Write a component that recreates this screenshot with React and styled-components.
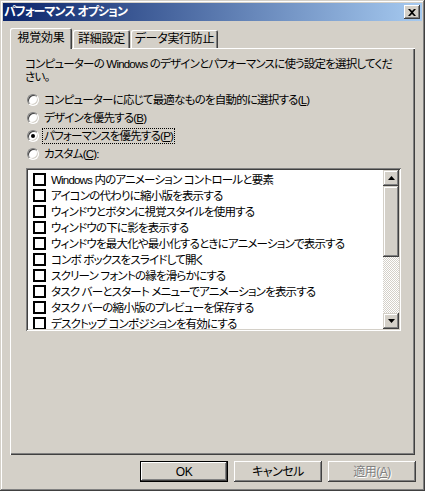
import React from "react";
import styled, { createGlobalStyle } from "styled-components";

const GlobalStyle = createGlobalStyle`
  html, body {
    margin: 0;
    padding: 0;
    background: #d4d0c8;
  }
`;

const raised = `
  box-shadow: inset -1px -1px #404040, inset 1px 1px #ffffff,
    inset -2px -2px #808080, inset 2px 2px #d4d0c8;
`;

// narrow Japanese text, close to the old bitmap UI font
const tight = `
  font-size: 11.5px;
  letter-spacing: -0.8px;
`;

const Window = styled.div`
  width: 425px;
  height: 491px;
  box-sizing: border-box;
  padding: 3px;
  background: #d4d0c8;
  box-shadow: inset -1px -1px #404040, inset 1px 1px #d4d0c8,
    inset -2px -2px #808080, inset 2px 2px #ffffff;
  display: flex;
  flex-direction: column;
  font-family: "Liberation Sans", "Noto Sans CJK JP", sans-serif;
  font-size: 12px;
  font-feature-settings: "palt";
  color: #000;
`;

const TitleBar = styled.div`
  height: 18px;
  flex: none;
  display: flex;
  align-items: center;
  justify-content: space-between;
  padding: 0 2px 0 1px;
  background: linear-gradient(to right, #0a246a, #a6caf0);
`;

const TitleText = styled.div`
  color: #fff;
  font-weight: bold;
  font-size: 12px;
  line-height: 18px;
  letter-spacing: -0.9px;
`;

const CloseButton = styled.div`
  width: 16px;
  height: 14px;
  background: #d4d0c8;
  ${raised}
  display: flex;
  align-items: center;
  justify-content: center;
`;

const Body = styled.div`
  flex: 1;
  display: flex;
  flex-direction: column;
  padding: 7px 7px 6px 7px;
  min-height: 0;
`;

const TabRow = styled.div`
  height: 20px;
  flex: none;
  display: flex;
  align-items: flex-end;
  position: relative;
  z-index: 1;
`;

const Tab = styled.div`
  box-sizing: border-box;
  width: ${(p) => p.$w}px;
  height: ${(p) => (p.$active ? 21 : 18)}px;
  margin-bottom: ${(p) => (p.$active ? -1 : 0)}px;
  margin-right: ${(p) => (p.$gap ? 1 : 0)}px;
  padding-bottom: ${(p) => (p.$active ? 2 : 0)}px;
  border-radius: 2px 2px 0 0;
  background: #d4d0c8;
  box-shadow: inset 1px 1px #ffffff, inset -1px 0 #404040, inset -2px 0 #808080;
  display: flex;
  align-items: center;
  justify-content: center;
  line-height: 14px;
  letter-spacing: -0.3px;
  white-space: nowrap;
`;

const Panel = styled.div`
  flex: 1;
  box-sizing: border-box;
  padding: 10px 15px 0 16px;
  box-shadow: inset 1px 1px #ffffff, inset -1px -1px #404040, inset -2px -2px #808080;
  display: flex;
  flex-direction: column;
`;

const Intro = styled.div`
  ${tight}
  line-height: 13px;
  margin-left: -1px;
  margin-bottom: 7px;
  white-space: nowrap;
`;

const RadioRow = styled.div`
  height: 18px;
  display: flex;
  align-items: center;
  gap: 4px;
  padding-left: 1px;
`;

const RadioDot = styled.span`
  position: relative;
  box-sizing: border-box;
  width: 12px;
  height: 12px;
  flex: none;
  border-radius: 50%;
  background: #fff;
  border: 1px solid;
  border-color: #808080 #ffffff #ffffff #808080;
  box-shadow: inset 1px 1px #404040, inset -1px -1px #d4d0c8;

  &::after {
    content: "";
    display: ${(p) => (p.$checked ? "block" : "none")};
    position: absolute;
    left: 3px;
    top: 3px;
    width: 4px;
    height: 4px;
    border-radius: 50%;
    background: #000;
  }
`;

const RadioLabel = styled.span`
  ${tight}
  line-height: 14px;
  padding: 0 1px;
  outline: ${(p) => (p.$focus ? "1px dotted #000" : "none")};
  white-space: nowrap;
`;

const ListBox = styled.div`
  margin-top: 5px;
  height: 163px;
  box-sizing: border-box;
  padding: 2px;
  margin-right: -1px;
  background: #fff;
  box-shadow: inset 1px 1px #808080, inset -1px -1px #ffffff,
    inset 2px 2px #404040, inset -2px -2px #d4d0c8;
  display: flex;
`;

const Items = styled.div`
  flex: 1;
  overflow: hidden;
  padding-top: 1px;
`;

const Item = styled.div`
  ${tight}
  height: 16px;
  display: flex;
  align-items: center;
  gap: 5px;
  padding-left: 5px;
  white-space: nowrap;
`;

const Check = styled.span`
  width: 13px;
  height: 13px;
  box-sizing: border-box;
  border: 2px solid #000;
  background: #fff;
  flex: none;
`;

const ScrollBar = styled.div`
  width: 16px;
  flex: none;
  display: flex;
  flex-direction: column;
`;

const ScrollButton = styled.div`
  height: 16px;
  flex: none;
  background: #d4d0c8;
  box-shadow: inset -1px -1px #404040, inset 1px 1px #d4d0c8,
    inset -2px -2px #808080, inset 2px 2px #ffffff;
  display: flex;
  align-items: center;
  justify-content: center;
`;

const Thumb = styled(ScrollButton)`
  height: 71px;
`;

const Track = styled.div`
  flex: 1;
  background-color: #d4d0c8;
  background-image: conic-gradient(#ffffff 25%, #d4d0c8 0 50%, #ffffff 0 75%, #d4d0c8 0);
  background-size: 2px 2px;
`;

const ButtonRow = styled.div`
  flex: none;
  display: flex;
  justify-content: flex-end;
  gap: 6px;
  margin-top: 6px;
  margin-right: -1px;
`;

const Button = styled.div`
  width: 88px;
  height: 21px;
  box-sizing: border-box;
  background: #d4d0c8;
  display: flex;
  align-items: center;
  justify-content: center;
  line-height: 14px;
  letter-spacing: -0.5px;
  color: ${(p) => (p.$disabled ? "#808080" : "#000")};
  text-shadow: ${(p) => (p.$disabled ? "1px 1px #ffffff" : "none")};
  ${(p) =>
    p.$default
      ? `box-shadow: inset 0 0 0 1px #000, inset -2px -2px #404040, inset 2px 2px #ffffff, inset -3px -3px #808080;`
      : `box-shadow: inset -1px -1px #404040, inset 1px 1px #ffffff, inset -2px -2px #808080, inset 2px 2px #d4d0c8;`}
`;

const Arrow = ({ down }) => (
  <svg width="7" height="4" viewBox="0 0 7 4">
    <path d={down ? "M0 0H7L3.5 4Z" : "M0 4H7L3.5 0Z"} fill="#000" />
  </svg>
);

const CloseIcon = () => (
  <svg width="8" height="7" viewBox="0 0 8 7">
    <path d="M0 0h2l2 2 2-2h2L5 3.5 8 7H6L4 5 2 7H0l3-3.5Z" fill="#000" />
  </svg>
);

const radios = [
  { label: "コンピューターに応じて最適なものを自動的に選択する", key: "L" },
  { label: "デザインを優先する", key: "B" },
  { label: "パフォーマンスを優先する", key: "P", checked: true },
  { label: "カスタム", key: "C", colon: true },
];

const effects = [
  "Windows 内のアニメーション コントロールと要素",
  "アイコンの代わりに縮小版を表示する",
  "ウィンドウとボタンに視覚スタイルを使用する",
  "ウィンドウの下に影を表示する",
  "ウィンドウを最大化や最小化するときにアニメーションで表示する",
  "コンボ ボックスをスライドして開く",
  "スクリーン フォントの縁を滑らかにする",
  "タスク バーとスタート メニューでアニメーションを表示する",
  "タスク バーの縮小版のプレビューを保存する",
  "デスクトップ コンポジションを有効にする",
];

const App = () => {
  return (
    <>
      <GlobalStyle />
      <Window>
        <TitleBar>
          <TitleText>パフォーマンス オプション</TitleText>
          <CloseButton>
            <CloseIcon />
          </CloseButton>
        </TitleBar>
        <Body>
          <TabRow>
            <Tab $active $w={62} $gap>
              視覚効果
            </Tab>
            <Tab $w={57} $gap>
              詳細設定
            </Tab>
            <Tab $w={87}>データ実行防止</Tab>
          </TabRow>
          <Panel>
            <Intro>
              コンピューターの Windows のデザインとパフォーマンスに使う設定を選択してくだ
              <br />
              さい。
            </Intro>
            {radios.map((r) => (
              <RadioRow key={r.key}>
                <RadioDot $checked={r.checked} />
                <RadioLabel $focus={r.checked}>
                  {r.label}(<u>{r.key}</u>){r.colon ? ":" : ""}
                </RadioLabel>
              </RadioRow>
            ))}
            <ListBox>
              <Items>
                {effects.map((e) => (
                  <Item key={e}>
                    <Check />
                    <span>{e}</span>
                  </Item>
                ))}
              </Items>
              <ScrollBar>
                <ScrollButton>
                  <Arrow />
                </ScrollButton>
                <Thumb />
                <Track />
                <ScrollButton>
                  <Arrow down />
                </ScrollButton>
              </ScrollBar>
            </ListBox>
          </Panel>
          <ButtonRow>
            <Button $default>OK</Button>
            <Button>キャンセル</Button>
            <Button $disabled>
              適用(<u>A</u>)
            </Button>
          </ButtonRow>
        </Body>
      </Window>
    </>
  );
};

export default App;
